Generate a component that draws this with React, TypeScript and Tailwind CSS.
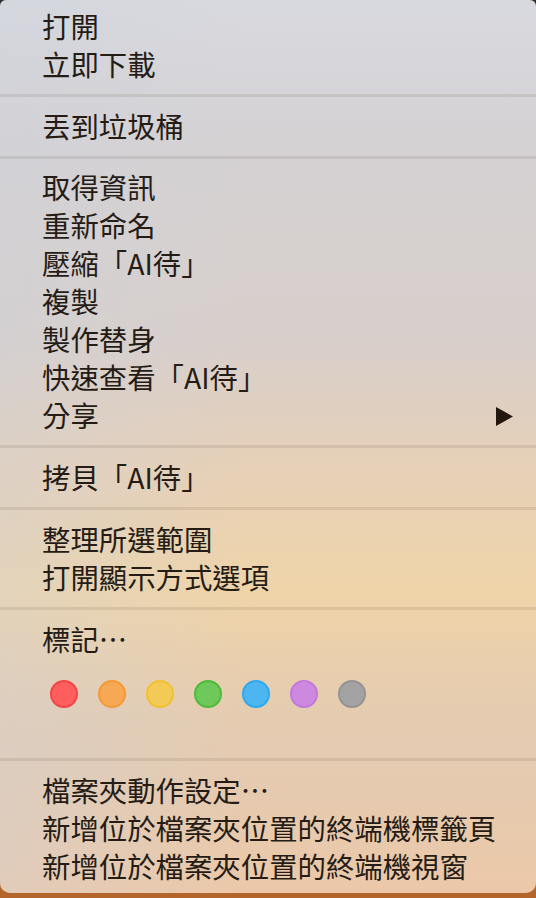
import React from "react";

const font = {
  fontFamily: '"Noto Sans CJK TC", "Noto Sans CJK SC", "Noto Sans", sans-serif',
};

function Item({ label, arrow }: { label: string; arrow?: boolean }) {
  return (
    <div className="flex h-[38px] items-center justify-between pl-[42px] pr-[22px] text-[28.4px] leading-none text-[#261c16]">
      <span className="whitespace-nowrap">{label}</span>
      {arrow && (
        <svg width="18" height="19" viewBox="0 0 18 19" className="mt-[2px]">
          <path d="M0 0 L17 9.5 L0 19 Z" fill="#24170f" />
        </svg>
      )}
    </div>
  );
}

function Sep() {
  return <div className="mb-[10px] mt-[11px] h-[3px] w-full bg-[rgba(90,70,60,0.12)]" />;
}

const dots = [
  ["bg-[#fe5f5e]", "border-[#f24646]"],
  ["bg-[#f7a855]", "border-[#f39a34]"],
  ["bg-[#f4ca57]", "border-[#f1c032]"],
  ["bg-[#6ec95a]", "border-[#4fb93a]"],
  ["bg-[#4db6f1]", "border-[#2ea9ee]"],
  ["bg-[#cd89e0]", "border-[#c278db]"],
  ["bg-[#a3a3a3]", "border-[#939393]"],
];

export default function App() {
  return (
    <div
      className="h-[898px] w-[536px] overflow-hidden"
      style={{ ...font, background: "linear-gradient(180deg, #2e2e30 0%, #7a6a5a 50%, #b3652b 100%)" }}
    >
      <div
        className="relative h-[893px] w-full overflow-hidden rounded-b-[10px] rounded-t-[6px]"
        style={{
          background:
            "linear-gradient(180deg, #d8d9df 0%, #d5d2d4 15%, #d8cfcb 38%, #e6d0b8 52%, #efd4a9 66%, #e7cdae 80%, #ecc8a8 100%)",
        }}
      >
        <div
          className="pointer-events-none absolute inset-0"
          style={{
            background:
              "linear-gradient(90deg, rgba(205,210,220,0.35) 0%, rgba(205,210,220,0) 45%), linear-gradient(180deg, rgba(0,0,0,0) 70%, rgba(220,200,185,0.35) 85%, rgba(0,0,0,0) 100%)",
          }}
        />
        <div className="relative flex flex-col pt-[7px]">
          <Item label="打開" />
          <Item label="立即下載" />
          <Sep />
          <Item label="丟到垃圾桶" />
          <Sep />
          <div className="-mt-[1px]" />
          <Item label="取得資訊" />
          <Item label="重新命名" />
          <Item label="壓縮「AI待」" />
          <Item label="複製" />
          <Item label="製作替身" />
          <Item label="快速查看「AI待」" />
          <Item label="分享" arrow />
          <Sep />
          <Item label="拷貝「AI待」" />
          <Sep />
          <Item label="整理所選範圍" />
          <Item label="打開顯示方式選項" />
          <Sep />
          <Item label="標記⋯" />
          <div className="flex gap-[20px] pb-[39px] pl-[50px] pt-[22px]">
            {dots.map(([bg, br], i) => (
              <div key={i} className={`h-[28px] w-[28px] rounded-full border-2 ${bg} ${br}`} />
            ))}
          </div>
          <Sep />
          <Item label="檔案夾動作設定⋯" />
          <Item label="新增位於檔案夾位置的終端機標籤頁" />
          <Item label="新增位於檔案夾位置的終端機視窗" />
        </div>
      </div>
    </div>
  );
}
